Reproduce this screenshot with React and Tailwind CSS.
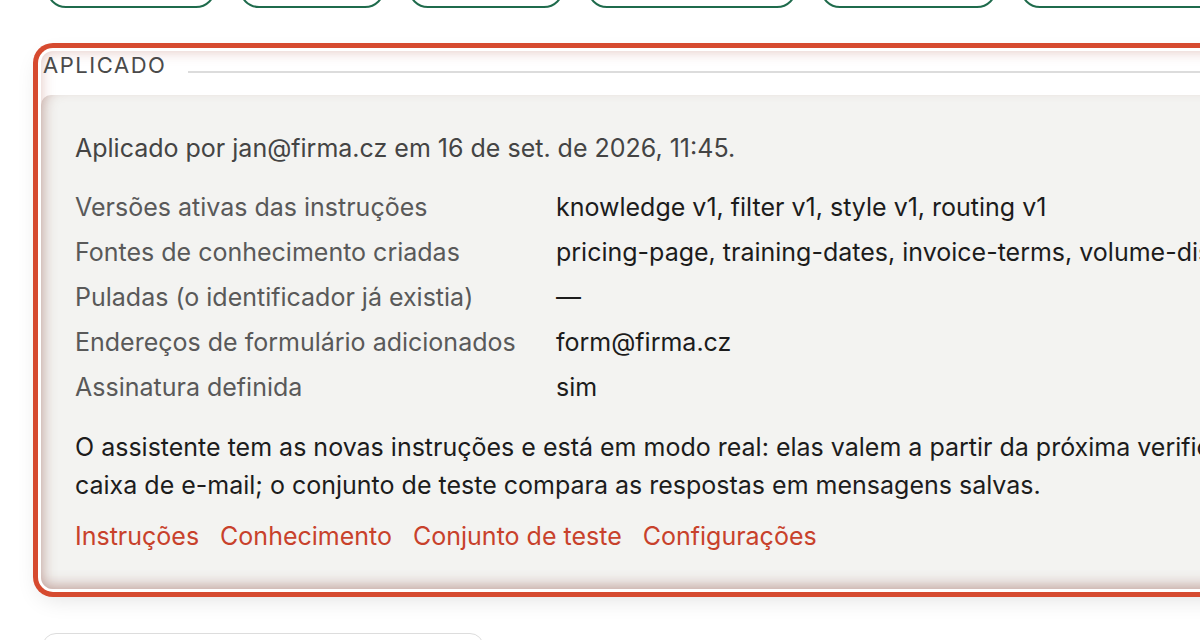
import React from "react";

const pills = ["w-[170px]", "w-[146px]", "w-[156px]", "w-[210px]", "w-[177px]", "w-[200px]"];

const rows = [
  ["Versões ativas das instruções", "knowledge v1, filter v1, style v1, routing v1"],
  ["Fontes de conhecimento criadas", "pricing-page, training-dates, invoice-terms, volume-discounts, onboarding-faq"],
  ["Puladas (o identificador já existia)", "—"],
  ["Endereços de formulário adicionados", "form@firma.cz"],
  ["Assinatura definida", "sim"],
];

const links = ["Instruções", "Conhecimento", "Conjunto de teste", "Configurações"];

export default function App() {
  return (
    <div
      className="w-[1200px] h-[640px] overflow-hidden bg-white"
      style={{ fontFamily: "Inter, 'Noto Sans', sans-serif" }}
    >
      {/* top action pills, mostly scrolled out of view */}
      <div className="flex gap-[23px] pl-[46px] -mt-[32px]">
        {pills.map((w, i) => (
          <div key={i} className={`${w} h-[40px] shrink-0 rounded-full border-2 border-[#1f6b4c] bg-white`} />
        ))}
      </div>

      <section className="ml-[41px] mt-[43px] w-[1440px] h-[538px] rounded-[12px] bg-white overflow-hidden flex flex-col shadow-[0_0_0_3px_#fff,0_0_0_8px_#d64a2f,0_8px_24px_rgba(0,0,0,0.14),inset_0_0_14px_rgba(170,80,70,0.35)]">
        <div className="flex items-center gap-[22px] h-[28px] shrink-0 pl-[2px]">
          <h3 className="text-[22px] leading-none tracking-[0.07em] text-[#4a4a4a] font-normal">
            APLICADO
          </h3>
          <div className="flex-1 h-[2px] bg-[#dcdcdc] mt-[14px]" />
        </div>

        <div className="mt-[16px] flex-1 rounded-tl-[10px] bg-[#f3f3f1] pl-[34px] pt-[37px] shadow-[inset_10px_0_14px_-8px_rgba(150,90,80,0.45),inset_0_-12px_14px_-8px_rgba(150,90,80,0.45)]">
          <p className="text-[25px] leading-[32px] text-[#444444]">
            Aplicado por jan@firma.cz em 16 de set. de 2026, 11:45.
          </p>

          <div className="mt-[21px] flex flex-col">
            {rows.map(([label, value]) => (
              <div key={label} className="flex h-[45px] items-center text-[25px] whitespace-nowrap">
                <span className="w-[481px] shrink-0 text-[#595959]">{label}</span>
                <span className="text-[#1c1c1c]">{value}</span>
              </div>
            ))}
          </div>

          <p className="mt-[18px] w-[1260px] text-[25px] leading-[38px] text-[#1c1c1c]">
            O assistente tem as novas instruções e está em modo real: elas valem a partir da próxima verificação da caixa de e-mail; o conjunto de teste compara as respostas em mensagens salvas.
          </p>

          <div className="mt-[16px] flex gap-[21px] text-[25px] leading-[32px] text-[#c8412b]">
            {links.map((l) => (
              <a key={l} href="#" className="hover:underline">
                {l}
              </a>
            ))}
          </div>
        </div>
      </section>

      <div className="ml-[42px] mt-[44px] w-[442px] h-[60px] rounded-[14px] border border-[#dddddd] bg-white" />
    </div>
  );
}
